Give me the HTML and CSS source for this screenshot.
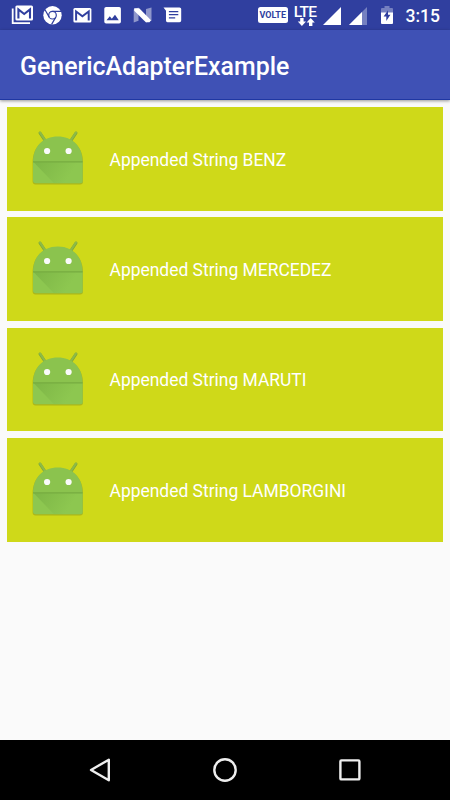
FILE: index.html
```html
<!DOCTYPE html>
<html lang="en">
  <head>
    <meta charset="UTF-8" />
    <meta name="viewport" content="width=device-width, initial-scale=1.0" />
    <title>GenericAdapterExample</title>
    <link rel="stylesheet" href="styles.css">
  </head>
  <body>
    <!-- shared robot icon -->
    <svg class="defs" width="0" height="0">
      <defs>
        <linearGradient id="fold" gradientUnits="userSpaceOnUse" x1="10" y1="35" x2="38" y2="54">
          <stop offset="0" stop-color="#70a83e" />
          <stop offset="1" stop-color="#8dc750" />
        </linearGradient>
        <symbol id="robot" viewBox="0 0 60 60">
          <path d="M12 6 L17 13.5 M48 6 L43 13.5" stroke="#7da83a" stroke-width="3" stroke-linecap="round" />
          <path d="M4.6 35.5 C4.6 20 15 10.2 29.8 10.2 S55 20 55 35.5 V54.5 Q55 57.5 52 57.5 H7.6 Q4.6 57.5 4.6 54.5 Z" fill="#9aa31a" opacity=".65" />
          <path d="M12 5.5 L17 13 M48 5.5 L43 13" stroke="#8dbb48" stroke-width="2" stroke-linecap="round" />
          <path d="M5 35 C5 19 15.5 9.5 29.8 9.5 S54.6 19 54.6 35 Z" fill="#8bc34e" />
          <path d="M5 35 H54.6 V53.5 Q54.6 56.3 51.8 56.3 H7.8 Q5 56.3 5 53.5 Z" fill="#8dc750" />
          <path d="M5.5 35 H54.6 V56.3 H26 Z" fill="url(#fold)" opacity=".5" />
          <path d="M5 34.9 H54.6" stroke="#76ab40" stroke-width="1.2" />
          <circle cx="19.1" cy="24" r="3.1" fill="#fafafa" />
          <circle cx="40.6" cy="24" r="3.1" fill="#fafafa" />
        </symbol>
      </defs>
    </svg>

    <!-- status bar -->
    <div class="status-bar">
      <svg class="status-icon" viewBox="0 0 30 30">
        <path d="M5.7 8.5 V23.2 H23" fill="none" stroke="#fff" stroke-width="1.8" />
        <rect x="8.4" y="5.6" width="17.6" height="15" rx="1.5" fill="#fff" />
        <path d="M11.4 18.4 V9.4 L17.2 14 L23 9.4 V18.4" fill="none" stroke="#303f9f" stroke-width="2.1" />
      </svg>
      <svg class="status-icon" viewBox="0 0 30 30">
        <circle cx="15.5" cy="15.2" r="9.2" fill="#fff" />
        <circle cx="15.5" cy="15.2" r="3.8" fill="none" stroke="#303f9f" stroke-width="1.2" />
        <path d="M15.5 11.4 H24 M12.2 17.1 L8 9.8 M18.8 17.1 L14.6 24.4" stroke="#303f9f" stroke-width="1.2" />
      </svg>
      <svg class="status-icon" viewBox="0 0 30 30">
        <rect x="6.4" y="8" width="18" height="14.4" rx="1.5" fill="#fff" />
        <path d="M9.1 20.4 V11.5 L15.4 16.3 L21.7 11.5 V20.4" fill="none" stroke="#303f9f" stroke-width="2" />
      </svg>
      <svg class="status-icon" viewBox="0 0 30 30">
        <rect x="7.3" y="7" width="16.6" height="16.6" rx="1.8" fill="#fff" />
        <path d="M9.5 20.3 L12.8 16.3 L14.8 18.7 L18 14.8 L21.8 20.3 Z" fill="#303f9f" />
      </svg>
      <svg class="status-icon" viewBox="0 0 30 30">
        <path d="M6.7 9.5 L11.5 7.5 V20.8 L6.7 22.5 Z M19 9 L24.5 7.5 V20.8 L19 22.5 Z" fill="#8f97cb" />
        <path d="M7.2 8.3 H12.2 L24 20.2 L22.5 22.2 H18.8 L7.2 10.8 Z" fill="#fff" />
      </svg>
      <svg class="status-icon" viewBox="0 0 30 30">
        <path d="M6.5 7.4 H22.5 Q24.2 7.4 24.2 9 V20.5 Q24.2 22.2 22.5 22.2 H10.5 Q9 22.2 9 20.5 V10.8 Z" fill="#fff" />
        <path d="M11.9 11.6 H21.3 M11.9 14.7 H21.3 M11.9 17.9 H18.2" stroke="#303f9f" stroke-width="1.3" />
      </svg>
      <div class="status-right">
        <span class="volte">VOLTE</span>
        <div class="lte">
          <span class="lte-label">LTE</span>
          <svg class="lte-arrows" viewBox="0 0 18 8">
            <path d="M3.2 0 H6.6 V3.4 H9 L4.9 8 L.8 3.4 H3.2 Z M12 8 H15.4 V4.6 H17.8 L13.7 0 L9.6 4.6 H12 Z" fill="#fff" />
          </svg>
        </div>
        <svg class="signal" viewBox="0 0 18 18">
          <path d="M0 18 L18 0 V18 Z" fill="#fff" />
        </svg>
        <svg class="signal signal-low" viewBox="0 0 18 18">
          <path d="M0 18 L18 0 V18 Z" fill="#7580c0" />
          <path d="M0 18 L13 5 V18 Z" fill="#fff" />
        </svg>
        <svg class="battery" viewBox="0 0 12 18">
          <path d="M3.5 0 H8.5 V2 H11 Q12 2 12 3 V7 H0 V3 Q0 2 1 2 H3.5 Z" fill="#7580c0" />
          <path d="M0 6.5 H12 V17 Q12 18 11 18 H1 Q0 18 0 17 Z" fill="#fff" />
          <path d="M7 4.3 L2.6 10.6 H5.3 V15 L9.4 8.8 H7 Z" fill="#303f9f" />
        </svg>
        <span class="clock">3:15</span>
      </div>
    </div>

    <!-- toolbar -->
    <header class="toolbar">
      <h1 class="toolbar-title">GenericAdapterExample</h1>
    </header>

    <!-- list -->
    <main class="list">
      <div class="card">
        <svg class="card-icon"><use href="#robot" /></svg>
        <span class="card-text">Appended String BENZ</span>
      </div>
      <div class="card">
        <svg class="card-icon"><use href="#robot" /></svg>
        <span class="card-text">Appended String MERCEDEZ</span>
      </div>
      <div class="card">
        <svg class="card-icon"><use href="#robot" /></svg>
        <span class="card-text">Appended String MARUTI</span>
      </div>
      <div class="card">
        <svg class="card-icon"><use href="#robot" /></svg>
        <span class="card-text">Appended String LAMBORGINI</span>
      </div>
    </main>

    <!-- navigation bar -->
    <nav class="nav-bar">
      <svg class="nav-icon" viewBox="0 0 30 30">
        <path d="M23.8 4.7 V25.3 L6 15 Z" />
      </svg>
      <svg class="nav-icon" viewBox="0 0 30 30">
        <circle cx="15" cy="15" r="10.7" />
      </svg>
      <svg class="nav-icon" viewBox="0 0 30 30">
        <rect x="5.4" y="5.4" width="19" height="19" rx="1" />
      </svg>
    </nav>
  </body>
</html>
```
FILE: styles.css
```css
html,
body,
h1 {
  margin: 0;
  padding: 0;
}
body {
  display: flex;
  flex-direction: column;
  height: 100vh;
  background-color: #fafafa;
  font-family: Roboto, "Liberation Sans", sans-serif;
  color: #fff;
  overflow: hidden;
}
svg {
  display: block;
  flex: none;
}
.defs {
  height: 0;
}

/* status bar */
.status-bar {
  display: flex;
  height: 30px;
  padding: 0 10px 0 7px;
  background-color: #303f9f;
}
.status-icon {
  width: 30px;
  height: 30px;
}
.status-right {
  display: flex;
  align-items: flex-start;
  margin-left: auto;
}
.volte {
  box-sizing: border-box;
  width: 30px;
  height: 16px;
  margin: 7px 6px 0 0;
  border-radius: 2.5px;
  background-color: #fff;
  color: #303f9f;
  font-size: 9px;
  font-weight: 700;
  line-height: 16px;
  text-align: center;
}
.lte {
  width: 23px;
  margin: 5px 6px 0 0;
}
.lte-label {
  display: block;
  height: 12px;
  font-size: 15.5px;
  font-weight: 500;
  line-height: 14px;
  letter-spacing: -0.7px;
}
.lte-arrows {
  width: 18px;
  height: 8px;
  margin: 1px 0 0 3px;
}
.signal {
  width: 18px;
  height: 18px;
  margin: 7px 8px 0 0;
}
.signal-low {
  margin-right: 14px;
}
.battery {
  width: 12px;
  height: 18px;
  margin: 6px 12.8px 0 0;
}
.clock {
  font-size: 17.5px;
  font-weight: 500;
  line-height: 32px;
}

/* toolbar */
.toolbar {
  z-index: 1;
  display: flex;
  align-items: center;
  height: 70px;
  padding: 5px 20px 0;
  box-sizing: border-box;
  border-bottom: 1px solid #1f37a3;
  background-color: #3f51b5;
  box-shadow: 0 1px 3px rgba(0, 0, 0, 0.4);
}
.toolbar-title {
  font-size: 24.9px;
  font-weight: 500;
  line-height: 34px;
}

/* list */
.list {
  display: flex;
  flex: 1;
  flex-direction: column;
  gap: 6.8px;
  padding: 7px 7px 0;
}
.card {
  display: flex;
  align-items: center;
  height: 103.6px;
  background-color: #cfd919;
}
.card-icon {
  width: 60px;
  height: 60px;
  margin: 0 22px 4px 20.5px;
}
.card-text {
  padding-top: 1.6px;
  font-size: 17.45px;
  line-height: 24px;
}

/* navigation bar */
.nav-bar {
  display: flex;
  justify-content: space-between;
  align-items: center;
  height: 60px;
  padding: 0 85px;
  background-color: #000;
}
.nav-icon {
  width: 30px;
  height: 30px;
  fill: none;
  stroke: #eee;
  stroke-width: 2.4;
  stroke-linejoin: round;
}
```
